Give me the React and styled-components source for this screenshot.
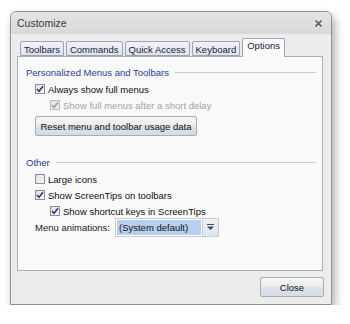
import React from "react";
import styled, { createGlobalStyle } from "styled-components";

const GlobalStyle = createGlobalStyle`
  html, body {
    margin: 0;
    padding: 0;
    background: #ffffff;
  }
  body {
    font-family: "Liberation Sans", Arial, sans-serif;
  }
`;

const tabs = ["Toolbars", "Commands", "Quick Access", "Keyboard", "Options"];

const Check = ({ checked, disabled }) => (
  <Box $disabled={disabled}>
    {checked && (
      <svg width="10" height="10" viewBox="0 0 10 10">
        <polyline
          points="2,5 4,7.3 8,2.3"
          fill="none"
          stroke={disabled ? "#9aa0a8" : "#2b3a5c"}
          strokeWidth="1.5"
        />
      </svg>
    )}
  </Box>
);

const CheckRow = ({ checked, disabled, level = 0, children }) => (
  <Row $level={level}>
    <Check checked={checked} disabled={disabled} />
    <Label $disabled={disabled}>{children}</Label>
  </Row>
);

const App = () => {
  return (
    <>
      <GlobalStyle />
      <Page>
        <Window>
          <TitleBar>
            <Title>Customize</Title>
            <svg width="9" height="9" viewBox="0 0 9 9">
              <path d="M1.5 1.5 L7.5 7.5 M7.5 1.5 L1.5 7.5" stroke="#5c5c5c" strokeWidth="1.7" />
            </svg>
          </TitleBar>
          <Body>
            <TabRow>
              {tabs.map((t) => (
                <Tab key={t} $active={t === "Options"}>
                  {t}
                </Tab>
              ))}
            </TabRow>
            <Panel>
              <GroupHeader>
                <span>Personalized Menus and Toolbars</span>
                <Rule />
              </GroupHeader>
              <CheckRow checked>Always show full menus</CheckRow>
              <CheckRow checked disabled level={1}>
                Show full menus after a short delay
              </CheckRow>
              <ResetButton>Reset menu and toolbar usage data</ResetButton>

              <GroupHeader $other>
                <span>Other</span>
                <Rule />
              </GroupHeader>
              <CheckRow>Large icons</CheckRow>
              <CheckRow checked>Show ScreenTips on toolbars</CheckRow>
              <CheckRow checked level={1}>
                Show shortcut keys in ScreenTips
              </CheckRow>
              <ComboRow>
                <ComboLabel>Menu animations:</ComboLabel>
                <Combo>
                  <ComboField>
                    <Selected>(System default)</Selected>
                  </ComboField>
                  <ComboButton>
                    <svg width="9" height="7" viewBox="0 0 9 7">
                      <rect x="1" y="0" width="7" height="1" fill="#3c4a66" />
                      <polygon points="1,2.5 8,2.5 4.5,6" fill="#3c4a66" />
                    </svg>
                  </ComboButton>
                </Combo>
              </ComboRow>
            </Panel>
            <Footer>
              <CloseButton>Close</CloseButton>
            </Footer>
          </Body>
        </Window>
      </Page>
    </>
  );
};

const Page = styled.div`
  padding: 11px 0 0 10px;
`;

const Window = styled.div`
  width: 322px;
  height: 294px;
  box-sizing: border-box;
  border: 1px solid #8d939c;
  border-radius: 6px 6px 0 0;
  background: #ececec;
  box-shadow: 3px 5px 10px rgba(0, 0, 0, 0.33);
  display: flex;
  flex-direction: column;
`;

const TitleBar = styled.div`
  height: 22px;
  padding: 0 8px 0 6px;
  display: flex;
  align-items: center;
  justify-content: space-between;
  border-radius: 5px 5px 0 0;
  background: linear-gradient(#e4e4e4, #d9d9d9);
`;

const Title = styled.span`
  font-family: "Liberation Sans", Arial, sans-serif;
  font-size: 10.5px;
  color: #3a3a3a;
`;

const Body = styled.div`
  flex: 1;
  padding: 4px 8px 0 6px;
  display: flex;
  flex-direction: column;
`;

const TabRow = styled.div`
  display: flex;
  align-items: flex-end;
  height: 18px;
  padding-left: 3px;
  gap: 2px;
`;

const Tab = styled.div`
  height: ${(p) => (p.$active ? "19px" : "15px")};
  margin-bottom: ${(p) => (p.$active ? "-1px" : "0")};
  padding: ${(p) => (p.$active ? "1px 4px 0" : "2px 3px 0")};
  box-sizing: border-box;
  border: 1px solid #9ca5b1;
  border-bottom: ${(p) => (p.$active ? "none" : "1px solid #9ca5b1")};
  border-radius: 2px 2px 0 0;
  background: ${(p) =>
    p.$active ? "#fbfbfb" : "linear-gradient(#f1f3f6, #dfe4ea)"};
  font-size: 9.5px;
  line-height: 11px;
  color: #1c2045;
  position: relative;
  z-index: ${(p) => (p.$active ? 1 : 0)};
`;

const Panel = styled.div`
  height: 215px;
  box-sizing: border-box;
  border: 1px solid #a7afb9;
  background: #f9f9f9;
  padding: 9px 6px 0 8px;
  display: flex;
  flex-direction: column;
`;

const GroupHeader = styled.div`
  display: flex;
  align-items: center;
  gap: 6px;
  height: 12px;
  margin-top: ${(p) => (p.$other ? "20px" : "0")};
  margin-bottom: 3px;
  font-size: 9.5px;
  color: #1f3f96;
`;

const Rule = styled.div`
  flex: 1;
  height: 1px;
  background: #c3cfdc;
`;

const Row = styled.div`
  display: flex;
  align-items: center;
  height: 16px;
  padding-left: ${(p) => 9 + p.$level * 15}px;
  gap: 3px;
`;

const Box = styled.div`
  width: 10px;
  height: 10px;
  box-sizing: border-box;
  border: 1px solid ${(p) => (p.$disabled ? "#b9bec5" : "#8b9097")};
  background: ${(p) =>
    p.$disabled ? "#e6e8ea" : "linear-gradient(135deg, #dcdfe3, #f8f8f8)"};
  display: flex;
  align-items: center;
  justify-content: center;
  flex-shrink: 0;
  svg {
    margin: -1px;
  }
`;

const Label = styled.span`
  font-size: 9.5px;
  color: ${(p) => (p.$disabled ? "#a3a3a3" : "#111111")};
`;

const buttonFace = `
  box-sizing: border-box;
  border: 1px solid #a5adb8;
  border-radius: 2px;
  background: linear-gradient(#f6f6f6 0%, #ececec 50%, #dde3eb 50%, #d5dce6 100%);
  font-family: "Liberation Sans", Arial, sans-serif;
  font-size: 9.5px;
  color: #111111;
  display: flex;
  align-items: center;
  justify-content: center;
`;

const ResetButton = styled.div`
  ${buttonFace}
  width: 162px;
  height: 20px;
  margin: 3px 0 0 9px;
`;

const ComboRow = styled.div`
  display: flex;
  align-items: center;
  gap: 5px;
  margin: -1px 0 0 9px;
`;

const ComboLabel = styled.span`
  font-size: 9.5px;
  color: #1a1a1a;
`;

const Combo = styled.div`
  display: flex;
  height: 19px;
  box-sizing: border-box;
  border: 1px solid #c5ccd6;
  background: #ffffff;
`;

const ComboField = styled.div`
  width: 86px;
  padding: 1px;
  box-sizing: border-box;
  display: flex;
`;

const Selected = styled.div`
  flex: 1;
  background: #b8cfee;
  font-size: 9.5px;
  color: #111111;
  display: flex;
  align-items: center;
  padding-left: 2px;
`;

const ComboButton = styled.div`
  width: 15px;
  border-left: 1px solid #c5ccd6;
  background: linear-gradient(#eef1f5, #dfe4ea);
  display: flex;
  align-items: center;
  justify-content: center;
`;

const Footer = styled.div`
  display: flex;
  justify-content: flex-end;
  padding-top: 6px;
`;

const CloseButton = styled.div`
  ${buttonFace}
  width: 64px;
  height: 20px;
  margin-right: -1px;
`;

export default App;
